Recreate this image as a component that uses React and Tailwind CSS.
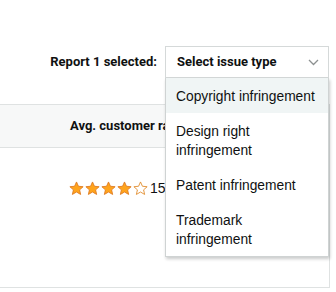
import React from 'react';

const Star = ({ filled }) => (
  <svg width="15" height="15" viewBox="0 0 24 24" className="shrink-0">
    <path
      d="M12 1.5l3.1 6.9 7.5.75-5.65 5 1.65 7.35L12 17.6l-6.6 3.9 1.65-7.35-5.65-5 7.5-.75z"
      fill={filled ? '#ffa41c' : '#ffffff'}
      stroke={filled ? '#de7921' : '#e08a2a'}
      strokeWidth="1.4"
      strokeLinejoin="round"
    />
  </svg>
);

const issues = [
  'Copyright infringement',
  'Design right infringement',
  'Patent infringement',
  'Trademark infringement',
];

export default function App() {
  return (
    <div className="relative h-[292px] w-[336px] overflow-hidden bg-white text-[#0f1111] [font-family:'Liberation_Sans',Arial,sans-serif]">
      {/* report bar */}
      <div className="flex items-center justify-end gap-2 pr-[7px] pt-[46px]">
        <span className="text-[13px] font-bold [font-family:Roboto,sans-serif]">Report 1 selected:</span>
        <div className="relative z-10 w-[164px]">
          <div className="flex h-[32px] items-center justify-between border border-[#d5d9d9] bg-white pl-[11px] pr-[9px]">
            <span className="text-[13px] font-bold [font-family:Roboto,sans-serif]">Select issue type</span>
            <svg width="11" height="7" viewBox="0 0 11 7">
              <path d="M1 1l4.5 4.5L10 1" fill="none" stroke="#8d9191" strokeWidth="1.3" />
            </svg>
          </div>
          {/* dropdown menu */}
          <ul className="absolute left-0 top-full w-[164px] border border-t-0 border-[#cfd3d3] bg-white shadow-[1px_2px_3px_rgba(15,17,17,0.22)]">
            {issues.map((item, idx) => (
              <li
                key={item}
                className={`pb-[7px] pt-[9px] pl-[10px] pr-[10px] text-[13.8px] leading-[19px] ${idx === 0 ? 'bg-[#f0f5f5]' : ''}`}
              >
                {item}
              </li>
            ))}
          </ul>
        </div>
      </div>

      {/* table */}
      <div className="mt-[26px] w-[330px] border-r border-[#dfe2e2]">
        <div className="flex h-[44px] items-center border-y border-[#dfe2e2] bg-[#f7f8f8] pl-[70px]">
          <span className="whitespace-nowrap text-[13px] font-bold [font-family:Roboto,sans-serif]">Avg. customer rating</span>
        </div>
        <div className="h-[140px] border-b border-[#dfe2e2] pl-[69px] pt-[30px]">
          <div className="flex items-center gap-[1px]">
            <Star filled />
            <Star filled />
            <Star filled />
            <Star filled />
            <Star />
            <span className="ml-[1px] text-[14px]">15</span>
          </div>
        </div>
      </div>
    </div>
  );
}
